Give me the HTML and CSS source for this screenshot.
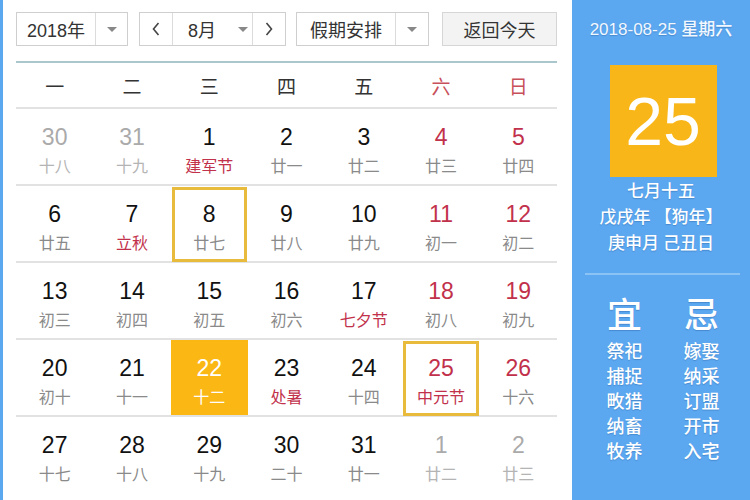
FILE: index.html
```html
<!DOCTYPE html>
<html lang="zh-CN">
<head>
<meta charset="utf-8">
<title>万年历</title>
<link rel="stylesheet" href="styles.css">
</head>
<body>
<div class="page">
  <div class="stripe"></div>
  <div class="main">
    <div class="toolbar">
      <div class="sel year">
        <span class="sel-text">2018年</span>
        <span class="sel-arrow"><i class="tri"></i></span>
      </div>
      <div class="sel month">
        <span class="nav"><svg width="10" height="16" viewBox="0 0 10 16"><path d="M7.5 2 L2.5 8 L7.5 14" fill="none" stroke="#444" stroke-width="1.6"/></svg></span>
        <span class="month-mid"><span class="m-text">8月</span><i class="tri"></i></span>
        <span class="nav nav-r"><svg width="10" height="16" viewBox="0 0 10 16"><path d="M2.5 2 L7.5 8 L2.5 14" fill="none" stroke="#444" stroke-width="1.6"/></svg></span>
      </div>
      <div class="sel holiday">
        <span class="sel-text">假期安排</span>
        <span class="sel-arrow"><i class="tri"></i></span>
      </div>
      <div class="today-btn">返回今天</div>
    </div>

    <div class="weekhead">
      <span>一</span><span>二</span><span>三</span><span>四</span><span>五</span><span class="wk">六</span><span class="wk">日</span>
    </div>

    <div class="grid">
      <div class="cell other"><span class="num">30</span><span class="lunar">十八</span></div>
      <div class="cell other"><span class="num">31</span><span class="lunar">十九</span></div>
      <div class="cell"><span class="num">1</span><span class="lunar fest">建军节</span></div>
      <div class="cell"><span class="num">2</span><span class="lunar">廿一</span></div>
      <div class="cell"><span class="num">3</span><span class="lunar">廿二</span></div>
      <div class="cell we"><span class="num">4</span><span class="lunar">廿三</span></div>
      <div class="cell we"><span class="num">5</span><span class="lunar">廿四</span></div>

      <div class="cell"><span class="num">6</span><span class="lunar">廿五</span></div>
      <div class="cell"><span class="num">7</span><span class="lunar fest">立秋</span></div>
      <div class="cell boxed"><span class="num">8</span><span class="lunar">廿七</span></div>
      <div class="cell"><span class="num">9</span><span class="lunar">廿八</span></div>
      <div class="cell"><span class="num">10</span><span class="lunar">廿九</span></div>
      <div class="cell we"><span class="num">11</span><span class="lunar">初一</span></div>
      <div class="cell we"><span class="num">12</span><span class="lunar">初二</span></div>

      <div class="cell"><span class="num">13</span><span class="lunar">初三</span></div>
      <div class="cell"><span class="num">14</span><span class="lunar">初四</span></div>
      <div class="cell"><span class="num">15</span><span class="lunar">初五</span></div>
      <div class="cell"><span class="num">16</span><span class="lunar">初六</span></div>
      <div class="cell"><span class="num">17</span><span class="lunar fest">七夕节</span></div>
      <div class="cell we"><span class="num">18</span><span class="lunar">初八</span></div>
      <div class="cell we"><span class="num">19</span><span class="lunar">初九</span></div>

      <div class="cell"><span class="num">20</span><span class="lunar">初十</span></div>
      <div class="cell"><span class="num">21</span><span class="lunar">十一</span></div>
      <div class="cell today"><span class="num">22</span><span class="lunar">十二</span></div>
      <div class="cell"><span class="num">23</span><span class="lunar fest">处暑</span></div>
      <div class="cell"><span class="num">24</span><span class="lunar">十四</span></div>
      <div class="cell we boxed"><span class="num">25</span><span class="lunar fest">中元节</span></div>
      <div class="cell we"><span class="num">26</span><span class="lunar">十六</span></div>

      <div class="cell last"><span class="num">27</span><span class="lunar">十七</span></div>
      <div class="cell last"><span class="num">28</span><span class="lunar">十八</span></div>
      <div class="cell last"><span class="num">29</span><span class="lunar">十九</span></div>
      <div class="cell last"><span class="num">30</span><span class="lunar">二十</span></div>
      <div class="cell last"><span class="num">31</span><span class="lunar">廿一</span></div>
      <div class="cell last other"><span class="num">1</span><span class="lunar">廿二</span></div>
      <div class="cell last other"><span class="num">2</span><span class="lunar">廿三</span></div>
    </div>
  </div>

  <div class="side">
    <div class="side-date">2018-08-25 星期六</div>
    <div class="big-day">25</div>
    <div class="side-lunar">
      <div>七月十五</div>
      <div>戊戌年 【狗年】</div>
      <div>庚申月 己丑日</div>
    </div>
    <div class="side-sep"></div>
    <div class="yiji">
      <div class="yj-col">
        <div class="yj-head">宜</div>
        <div>祭祀</div><div>捕捉</div><div>畋猎</div><div>纳畜</div><div>牧养</div>
      </div>
      <div class="yj-col">
        <div class="yj-head">忌</div>
        <div>嫁娶</div><div>纳采</div><div>订盟</div><div>开市</div><div>入宅</div>
      </div>
    </div>
  </div>
</div>
</body>
</html>
```

FILE: styles.css
```css
html, body {
  margin: 0;
  padding: 0;
  background: #fff;
}
body {
  font-family: "Liberation Sans", "Noto Sans CJK SC", sans-serif;
  color: #222;
}
.page {
  display: flex;
  width: 750px;
  height: 500px;
  overflow: hidden;
}
.stripe {
  width: 3px;
  background: #5ba8f1;
  flex: none;
}
.main {
  width: 541px;
  padding: 12px 15px 0 13px;
  flex: none;
}
.toolbar {
  display: flex;
  height: 34px;
  margin-bottom: 15px;
  font-size: 18px;
  color: #333;
}
.sel {
  display: flex;
  border: 1px solid #cfcfcf;
  box-sizing: border-box;
  height: 34px;
  background: #fff;
}
.sel-text {
  display: flex;
  align-items: center;
  justify-content: center;
  border-right: 1px solid #dcdcdc;
}
.sel-arrow {
  flex: 1;
  display: flex;
  align-items: center;
  justify-content: center;
}
.tri {
  display: block;
  width: 0;
  height: 0;
  border-left: 5px solid transparent;
  border-right: 5px solid transparent;
  border-top: 5px solid #888;
}
.year { width: 112px; }
.year .sel-text { width: 78px; }
.month { width: 147px; margin-left: 11px; }
.nav {
  width: 32px;
  display: flex;
  align-items: center;
  justify-content: center;
  border-right: 1px solid #dcdcdc;
  flex: none;
}
.nav-r {
  border-right: none;
  border-left: 1px solid #dcdcdc;
}
.month-mid {
  flex: 1;
  display: flex;
  align-items: center;
  padding-left: 15px;
}
.m-text { width: 50px; }
.holiday { width: 133px; margin-left: 10px; }
.holiday .sel-text { width: 98px; }
.today-btn {
  width: 115px;
  margin-left: 13px;
  height: 34px;
  box-sizing: border-box;
  border: 1px solid #d6d6d6;
  background: #f3f3f3;
  display: flex;
  align-items: center;
  justify-content: center;
}

.weekhead {
  display: grid;
  grid-template-columns: repeat(7, 1fr);
  border-top: 2px solid #a9c7cd;
  border-bottom: 2px solid #e2e2e2;
  height: 44px;
  align-items: center;
  text-align: center;
  font-family: "Noto Sans CJK SC", sans-serif;
  font-size: 19px;
  color: #333;
}
.weekhead .wk { color: #c8505a; }

.grid {
  display: grid;
  grid-template-columns: repeat(7, 1fr);
}
.cell {
  height: 77px;
  box-sizing: border-box;
  border-bottom: 2px solid #e2e2e2;
  display: flex;
  flex-direction: column;
  align-items: center;
  padding-top: 15px;
}
.cell.last { border-bottom: none; }
.num {
  font-size: 23px;
  line-height: 27px;
  color: #111;
}
.lunar {
  font-family: "Noto Sans CJK SC", sans-serif;
  font-size: 16px;
  line-height: 20px;
  margin-top: 4px;
  color: #8a8a8a;
}
.we .num { color: #c2314b; }
.fest { color: #c2314b; }
.other .num { color: #aaa; }
.other .lunar { color: #b4b4b4; }
.boxed {
  outline: 3px solid #e8bb3c;
  outline-offset: -4px;
}
.today {
  background: #fbb714;
}
.today .num, .today .lunar { color: #fff; }

.side {
  flex: 1;
  background: #5ba8f1;
  color: #fff;
  display: flex;
  flex-direction: column;
  align-items: center;
  font-family: "Noto Sans CJK SC", sans-serif;
  font-weight: 500;
  text-shadow: 0 1px 1px rgba(30, 70, 130, 0.3);
}
.side-date {
  font-family: "Liberation Sans", "Noto Sans CJK SC", sans-serif;
  font-size: 17px;
  line-height: 24px;
  margin-top: 18px;
  color: #f2f8ff;
}
.big-day {
  width: 107px;
  height: 112px;
  margin-top: 23px;
  margin-left: 4px;
  background: #f8b618;
  display: flex;
  align-items: center;
  justify-content: center;
  font-family: "Liberation Sans", sans-serif;
  font-weight: normal;
  font-size: 68px;
  color: #fff;
  text-shadow: none;
}
.side-lunar {
  text-align: center;
  font-size: 17px;
  line-height: 26px;
  margin-top: 0;
}
.side-sep {
  align-self: stretch;
  height: 2px;
  background: #8cc3f5;
  margin: 18px 10px 0 13px;
}
.yiji {
  display: flex;
  align-self: stretch;
  padding-left: 14px;
  margin-top: 18px;
}
.yj-col {
  width: 77px;
  display: flex;
  flex-direction: column;
  align-items: center;
  font-size: 18px;
  line-height: 25px;
}
.yj-head {
  font-size: 35px;
  line-height: 40px;
  margin-bottom: 5px;
}
```
